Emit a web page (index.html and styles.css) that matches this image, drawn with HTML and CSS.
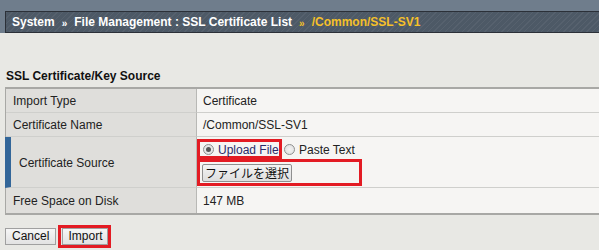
FILE: index.html
```html
<!DOCTYPE html>
<html>
<head>
<meta charset="utf-8">
<link rel="stylesheet" href="styles.css">
</head>
<body>
<div class="header">
  <div class="crumbs">
    <span>System</span><span class="sep">»</span><span>File Management : SSL Certificate List</span><span class="sep gold">»</span><span class="gold">/Common/SSL-SV1</span>
  </div>
</div>
<div class="title">SSL Certificate/Key Source</div>
<div class="table">
  <div class="lab">Import Type</div><div class="val">Certificate</div>
  <div class="lab">Certificate Name</div><div class="val">/Common/SSL-SV1</div>
  <div class="lab lab-active">Certificate Source</div>
  <div class="val val-src">
    <div class="radios">
      <span class="mark mark-a"><span class="radio checked"></span><span class="rtext">Upload File</span></span><span class="radio"></span><span class="rtext">Paste Text</span>
    </div>
    <div class="mark mark-b"><button class="filebtn">ファイルを選択</button></div>
  </div>
  <div class="lab">Free Space on Disk</div><div class="val">147 MB</div>
</div>
<div class="actions">
  <button class="btn">Cancel</button>
  <span class="mark mark-c"><button class="btn">Import</button></span>
</div>
</body>
</html>
```
FILE: styles.css
```css
html, body { margin: 0; padding: 0; }
body {
  background: #e8e8e4;
  font-family: "Liberation Sans", Arial, sans-serif;
  font-size: 12px;
  color: #222;
  width: 599px;
  overflow: hidden;
}
.header {
  background: #6f7d8c;
  padding: 11px 0 0 5px;
}
.crumbs {
  height: 22px;
  box-sizing: border-box;
  border: 1px solid #2b3038;
  border-right: none;
  background: #4d5966 repeating-linear-gradient(135deg, rgba(255,255,255,0.05) 0 1px, transparent 1px 4px);
  color: #fff;
  font-weight: bold;
  font-size: 12px;
  line-height: 20px;
  padding-left: 6px;
  white-space: nowrap;
}
.sep { font-size: 10px; margin: 0 7px 0 7px; position: relative; top: 1px; }
.gold { color: #f5c02a; }
.title {
  margin: 36px 0 0 6px;
  font-weight: bold;
  line-height: 14px;
  color: #111;
}
.table {
  margin: 4px 0 0 5px;
  width: 600px;
  display: grid;
  grid-template-columns: 191px 1fr;
  border-top: 2px solid #a8a8a5;
  border-bottom: 2px solid #a8a8a5;
  border-left: 1px solid #a8a8a5;
}
.lab, .val {
  border-bottom: 1px solid #cfcfcc;
  display: flex;
  align-items: center;
  height: 24px;
  box-sizing: border-box;
  padding-top: 1px;
}
.table > .lab:nth-last-child(2), .table > .val:last-child { border-bottom: none; height: 25px; }
.lab {
  background: #dfdedb;
  border-right: 1px solid #b8b8b5;
  padding-left: 7px;
  color: #222;
}
.val {
  background: #f6f5f3;
  padding-left: 6px;
  color: #222;
}
.lab-active {
  height: 51px;
  border-left: 6px solid #336699;
  padding-left: 8px;
  margin-left: -1px;
}
.val-src {
  height: 51px;
  flex-direction: column;
  align-items: flex-start;
  justify-content: flex-start;
  padding: 2px 0 0 0;
}
.radios { display: flex; align-items: center; height: 20px; }
.mark { border: 3px solid #e31b23; box-sizing: border-box; }
.mark-a {
  display: inline-flex;
  align-items: center;
  height: 20px;
  width: 85px;
  padding-left: 3px;
  padding-top: 1px;
}
.radio {
  display: inline-block;
  width: 11px;
  height: 11px;
  border-radius: 50%;
  box-sizing: border-box;
  border: 1px solid #8e8f8f;
  background: radial-gradient(circle at 50% 50%, #f4f4f4 0, #dcdcdc 100%);
  position: relative;
  margin-right: 4px;
  margin-left: 2px;
}
.radio.checked::after {
  content: "";
  position: absolute;
  left: 2px; top: 2px;
  width: 5px; height: 5px;
  border-radius: 50%;
  background: #555;
}
.mark-a .radio { margin-left: 0; }
.mark-a .rtext { color: #2a2a6a; }
.rtext { white-space: nowrap; }
.radios > .rtext { padding-top: 1px; }
.mark-b {
  display: flex;
  align-items: center;
  width: 165px;
  height: 27px;
  padding-left: 2px;
}
.filebtn {
  font-family: "Noto Sans CJK JP", "Liberation Sans", sans-serif;
  font-size: 12px;
  height: 18px;
  width: 90px;
  padding: 0;
  line-height: 16px;
  border: 1px solid #8f8f8f;
  border-radius: 2px;
  background: linear-gradient(#f4f4f4, #dedede);
  color: #111;
}
.actions {
  margin: 10px 0 0 5px;
  display: flex;
  align-items: center;
}
.mark-c {
  display: inline-flex;
  align-items: center;
  justify-content: center;
  height: 23px;
  width: 53px;
  margin-left: 2px;
}
.btn {
  font-family: "Liberation Sans", Arial, sans-serif;
  font-size: 12px;
  height: 17px;
  line-height: 15px;
  padding: 0 6px;
  border: 1px solid #a0a0a0;
  background: linear-gradient(#f6f6f6, #e2e2e2);
  color: #111;
}
.actions > .btn { width: 51px; }
.mark-c .btn { width: 46px; }
```
